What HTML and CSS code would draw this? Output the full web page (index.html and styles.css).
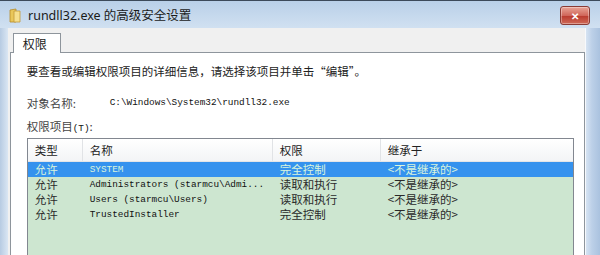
FILE: index.html
```html
<!DOCTYPE html>
<html lang="zh-CN">
<head>
    <meta charset="UTF-8">
    <title>rundll32.exe 的高级安全设置</title>
    <link rel="stylesheet" href="styles.css">
</head>
<body>
    <div class="window">
        <div class="titlebar">
            <svg class="title-icon" width="12" height="15" viewBox="0 0 12 15">
                <path d="M1 2 L7 1 L7 14 L1 14 Z" fill="#e9c75a" stroke="#b58a2a" stroke-width="0.8"/>
                <path d="M5 3 L11 3 L11 14 L5 14 Z" fill="#f6e08e" stroke="#c39b38" stroke-width="0.8"/>
            </svg>
            <span class="title-text">rundll32.exe 的高级安全设置</span>
            <div class="close-btn">&#x2715;</div>
        </div>
        <div class="frame">
            <div class="frame-side"></div>
            <div class="client">
                <div class="tabs">
                    <div class="tab">权限</div>
                </div>
                <div class="panel">
                    <p class="intro">要查看或编辑权限项目的详细信息，请选择该项目并单击“编辑”。</p>
                    <div class="object-row">
                        <span class="label">对象名称:</span>
                        <span class="mono">C:\Windows\System32\rundll32.exe</span>
                    </div>
                    <div class="list-label">权限项目<span class="mono">(T)</span>:</div>
                    <div class="listview">
                        <div class="list-head">
                            <div class="cell">类型</div>
                            <div class="cell">名称</div>
                            <div class="cell">权限</div>
                            <div class="cell">继承于</div>
                        </div>
                        <div class="list-body">
                            <div class="list-row selected">
                                <div class="cell">允许</div>
                                <div class="cell mono">SYSTEM</div>
                                <div class="cell">完全控制</div>
                                <div class="cell">&lt;不是继承的&gt;</div>
                            </div>
                            <div class="list-row">
                                <div class="cell">允许</div>
                                <div class="cell mono">Administrators (starmcu\Admi...</div>
                                <div class="cell">读取和执行</div>
                                <div class="cell">&lt;不是继承的&gt;</div>
                            </div>
                            <div class="list-row">
                                <div class="cell">允许</div>
                                <div class="cell mono">Users (starmcu\Users)</div>
                                <div class="cell">读取和执行</div>
                                <div class="cell">&lt;不是继承的&gt;</div>
                            </div>
                            <div class="list-row">
                                <div class="cell">允许</div>
                                <div class="cell mono">TrustedInstaller</div>
                                <div class="cell">完全控制</div>
                                <div class="cell">&lt;不是继承的&gt;</div>
                            </div>
                        </div>
                    </div>
                </div>
            </div>
            <div class="frame-side right"></div>
        </div>
    </div>
</body>
</html>
```

FILE: styles.css
```css
body {
    margin: 0;
    width: 600px;
    height: 255px;
    overflow: hidden;
    background: #d4e2f1;
    font-family: "Noto Sans CJK SC", "Noto Sans", sans-serif;
    font-size: 11.5px;
    color: #222;
}
.window {
    display: flex;
    flex-direction: column;
    height: 255px;
    border-top: 1px solid #3c4a5a;
    box-sizing: border-box;
    background: linear-gradient(to bottom, #b9d0e8, #d3e2f2 30px, #cfdff0);
}
.titlebar {
    height: 27px;
    flex-shrink: 0;
    display: flex;
    align-items: center;
    padding-left: 9px;
    padding-right: 10px;
}
.title-icon {
    margin-right: 7px;
    margin-top: 1px;
}
.title-text {
    font-family: "Noto Sans", "Noto Sans CJK SC", sans-serif;
    font-size: 12.5px;
    color: #1a1a1a;
    flex: 1;
}
.close-btn {
    width: 28px;
    height: 17px;
    border: 1px solid #8a3b35;
    border-radius: 3px;
    background: linear-gradient(to bottom, #e9a597, #d0665a 50%, #b9382c 51%, #cf6a58);
    color: #fff;
    font-size: 10px;
    font-weight: bold;
    line-height: 17px;
    text-align: center;
    margin-top: 1px;
    box-shadow: inset 0 0 0 1px rgba(255,255,255,0.35);
}
.frame {
    flex: 1;
    min-height: 0;
    display: flex;
}
.frame-side {
    width: 8px;
    background: linear-gradient(to right, #b7cbe2, #dae6f3);
}
.frame-side.right {
    width: 15px;
    border-left: 1px solid #f7f9fc;
    background: linear-gradient(to right, #d6e3f2, #bcd0e8 6px, #aac2df);
}
.client {
    flex: 1;
    min-height: 0;
    background: #f0f0f0;
    padding: 5px 0 0 2px;
    display: flex;
    flex-direction: column;
}
.tabs {
    display: flex;
    flex-shrink: 0;
    padding-left: 3px;
}
.tab {
    width: 48px;
    height: 20px;
    border: 1px solid #8e959c;
    border-bottom: none;
    background: #fff;
    padding-left: 9px;
    box-sizing: border-box;
    line-height: 20px;
    font-size: 12px;
    margin-bottom: -1px;
    position: relative;
}
.panel {
    flex: 1;
    min-height: 0;
    display: flex;
    flex-direction: column;
    background: #fff;
    border: 1px solid #8e959c;
    border-bottom: none;
    padding: 10px 10px 0 16px;
}
.intro {
    margin: 0;
    line-height: 16px;
}
.object-row {
    margin-top: 16px;
    line-height: 16px;
    display: flex;
}
.label {
    width: 83px;
    color: #444;
}
.mono {
    font-family: "Liberation Mono", monospace;
    font-size: 9.4px;
    color: #111;
}
.list-label {
    margin-top: 7px;
    line-height: 16px;
    color: #444;
}
.listview {
    margin-top: 1px;
    flex: 1;
    min-height: 0;
    border: 1px solid #828790;
    border-bottom: none;
    width: 545px;
    background: #cde6d0;
}
.list-head,
.list-row {
    display: grid;
    grid-template-columns: 55px 190px 108px 1fr;
}
.list-head {
    height: 22px;
    background: linear-gradient(to bottom, #ffffff, #f3f4f6);
    border-bottom: 1px solid #e3e5e8;
}
.list-head .cell {
    line-height: 22px;
    border-right: 1px solid #e1e3e6;
}
.list-head .cell:last-child {
    border-right: none;
}
.cell {
    padding-left: 7px;
    white-space: nowrap;
    overflow: hidden;
}
.list-row {
    height: 15px;
    line-height: 15px;
    color: #2a2a2a;
}
.list-row.selected {
    background: #3592ee;
    color: #d9f4dc;
}
.list-row.selected .mono {
    color: #d9f4dc;
}
```
